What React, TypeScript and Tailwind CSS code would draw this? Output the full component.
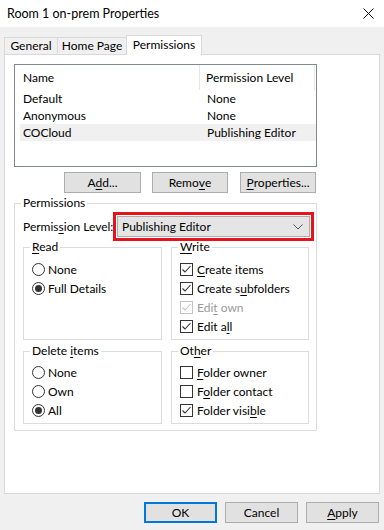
import React from "react";

const U = ({ children }: { children: React.ReactNode }) => (
  <span className="underline underline-offset-[2px]">{children}</span>
);

function Radio({ checked, label }: { checked?: boolean; label: React.ReactNode }) {
  return (
    <div className="flex items-center h-[19px]">
      <span className="w-[13px] h-[13px] rounded-full border border-[#333333] bg-white flex items-center justify-center shrink-0">
        {checked && <span className="w-[7px] h-[7px] rounded-full bg-[#333333]" />}
      </span>
      <span className="ml-[3px]">{label}</span>
    </div>
  );
}

function Check({
  checked,
  disabled,
  label,
}: {
  checked?: boolean;
  disabled?: boolean;
  label: React.ReactNode;
}) {
  return (
    <div className={`flex items-center h-[19px] ${disabled ? "text-[#9a9a9a]" : ""}`}>
      <span
        className={`w-[13px] h-[13px] border bg-white flex items-center justify-center shrink-0 ${
          disabled ? "border-[#c4c4c4]" : "border-[#333333]"
        }`}
      >
        {checked && (
          <svg width="11" height="11" viewBox="0 0 11 11">
            <polyline
              points="1.5,5.5 4,8 9.5,2"
              fill="none"
              stroke={disabled ? "#c4c4c4" : "#333333"}
              strokeWidth="1.1"
            />
          </svg>
        )}
      </span>
      <span className="ml-[4px]">{label}</span>
    </div>
  );
}

function Group({
  title,
  className,
  children,
  pt,
}: {
  title: React.ReactNode;
  className: string;
  children: React.ReactNode;
  pt: string;
}) {
  return (
    <fieldset className={`border border-[#dcdcdc] ${className}`}>
      <legend className="ml-[6px] px-[2px] leading-[12px]">{title}</legend>
      <div className={`pl-[8px] ${pt}`}>{children}</div>
    </fieldset>
  );
}

export default function App() {
  return (
    <div className="w-[384px] h-[530px] bg-[#f0f0f0] flex flex-col font-[family-name:Lato,sans-serif] text-[12px] text-black leading-[16px] overflow-hidden whitespace-nowrap">
      {/* Title bar */}
      <div className="h-[27px] bg-white flex items-center justify-between pl-[7px] pr-[10px] shrink-0">
        <span className="text-[12.5px]">Room 1 on-prem Properties</span>
        <svg width="11" height="11" viewBox="0 0 11 11">
          <path d="M0.5 0.5 L10.5 10.5 M10.5 0.5 L0.5 10.5" stroke="#000" strokeWidth="1" />
        </svg>
      </div>

      {/* Tabs */}
      <div className="relative z-10 flex items-end h-[20px] mt-[8px] pl-[4px] shrink-0">
        <div className="h-[17px] mb-[1px] w-[54px] border-l border-t border-r border-[#d9d9d9] flex items-center justify-center">
          General
        </div>
        <div className="h-[17px] mb-[1px] w-[68px] border-t border-[#d9d9d9] flex items-center justify-center">
          Home Page
        </div>
        <div className="h-[20px] w-[76px] bg-white border-l border-t border-r border-[#d9d9d9] flex items-center justify-center pb-[2px]">
          Permissions
        </div>
      </div>

      {/* Panel */}
      <div className="mx-[4px] -mt-[1px] h-[440px] bg-white border border-[#d9d9d9] pl-[9px] pt-[9px] shrink-0">
        {/* List */}
        <div className="w-[303px] h-[103px] border border-[#828790] bg-white">
          <div className="flex h-[25px] items-center">
            <div className="w-[185px] h-full flex items-center pl-[8px] border-r border-[#e5e5e5]">Name</div>
            <div className="w-[115px] h-full flex items-center pl-[6px] border-r border-[#e5e5e5]">
              Permission Level
            </div>
          </div>
          <div className="ml-[5px] w-[296px]">
            {[
              ["Default", "None", false],
              ["Anonymous", "None", false],
              ["COCloud", "Publishing Editor", true],
            ].map(([n, p, sel]) => (
              <div
                key={n as string}
                className={`flex h-[17px] items-center ${sel ? "bg-[#f0f0f0]" : ""}`}
              >
                <div className="w-[180px] pl-[3px]">{n}</div>
                <div className="pl-[7px]">{p}</div>
              </div>
            ))}
          </div>
        </div>

        {/* Buttons */}
        <div className="w-[303px] flex justify-end mt-[5px] pr-[1px]">
          <button className="w-[77px] h-[21px] bg-[#e1e1e1] border border-[#adadad] flex items-center justify-center">
            A<U>d</U>d...
          </button>
          <button className="ml-[11px] w-[76px] h-[21px] bg-[#e1e1e1] border border-[#adadad] flex items-center justify-center">
            Remo<U>v</U>e
          </button>
          <button className="ml-[12px] w-[76px] h-[21px] bg-[#e1e1e1] border border-[#adadad] flex items-center justify-center">
            <U>P</U>roperties...
          </button>
        </div>

        {/* Permissions group */}
        <fieldset className="mt-[4px] w-[303px] h-[234px] border border-[#dcdcdc]">
          <legend className="ml-[6px] px-[2px] leading-[12px]">Permissions</legend>
          <div className="pl-[8px]">
            <div className="flex items-center mt-[3px] h-[29px]">
              <div className="w-[90px]">
                Permis<U>s</U>ion Level:
              </div>
              <div className="w-[201px] h-[29px] border-[3px] border-[#e5141c] p-[1px]">
                <div className="h-full bg-[#e5e5e5] border border-[#adadad] flex items-center justify-between pl-[4px] pr-[6px]">
                  <span>Publishing Editor</span>
                  <svg width="10" height="6" viewBox="0 0 10 6">
                    <polyline points="0.5,0.5 5,5 9.5,0.5" fill="none" stroke="#555" strokeWidth="1" />
                  </svg>
                </div>
              </div>
            </div>

            <div className="flex">
              <Group title={<><U>R</U>ead</>} className="w-[139px] h-[99px]" pt="pt-[7px]">
                <Radio label="None" />
                <Radio checked label="Full Details" />
              </Group>
              <Group title={<><U>W</U>rite</>} className="ml-[9px] w-[138px] h-[99px]" pt="pt-[7px]">
                <Check checked label={<><U>C</U>reate items</>} />
                <Check checked label={<>Create s<U>u</U>bfolders</>} />
                <Check checked disabled label={<>Edi<U>t</U> own</>} />
                <Check checked label={<>Edit a<U>l</U>l</>} />
              </Group>
            </div>

            <div className="flex mt-[5px]">
              <Group title={<>Delete <U>i</U>tems</>} className="w-[139px] h-[79px]" pt="pt-[6px]">
                <Radio label="None" />
                <Radio label="Own" />
                <Radio checked label="All" />
              </Group>
              <Group title={<>Ot<U>h</U>er</>} className="ml-[9px] w-[138px] h-[79px]" pt="pt-[6px]">
                <Check label={<><U>F</U>older owner</>} />
                <Check label={<>F<U>o</U>lder contact</>} />
                <Check checked label={<>Folder visi<U>b</U>le</>} />
              </Group>
            </div>
          </div>
        </fieldset>
      </div>

      {/* Bottom buttons */}
      <div className="flex justify-end mt-[8px] pr-[5px] shrink-0">
        <button className="w-[73px] h-[21px] bg-[#e1e1e1] border-2 border-[#0078d7] flex items-center justify-center">
          OK
        </button>
        <button className="ml-[8px] w-[73px] h-[21px] bg-[#e1e1e1] border border-[#adadad] flex items-center justify-center">
          Cancel
        </button>
        <button className="ml-[8px] w-[73px] h-[21px] bg-[#e1e1e1] border border-[#adadad] flex items-center justify-center">
          <U>A</U>pply
        </button>
      </div>
    </div>
  );
}
